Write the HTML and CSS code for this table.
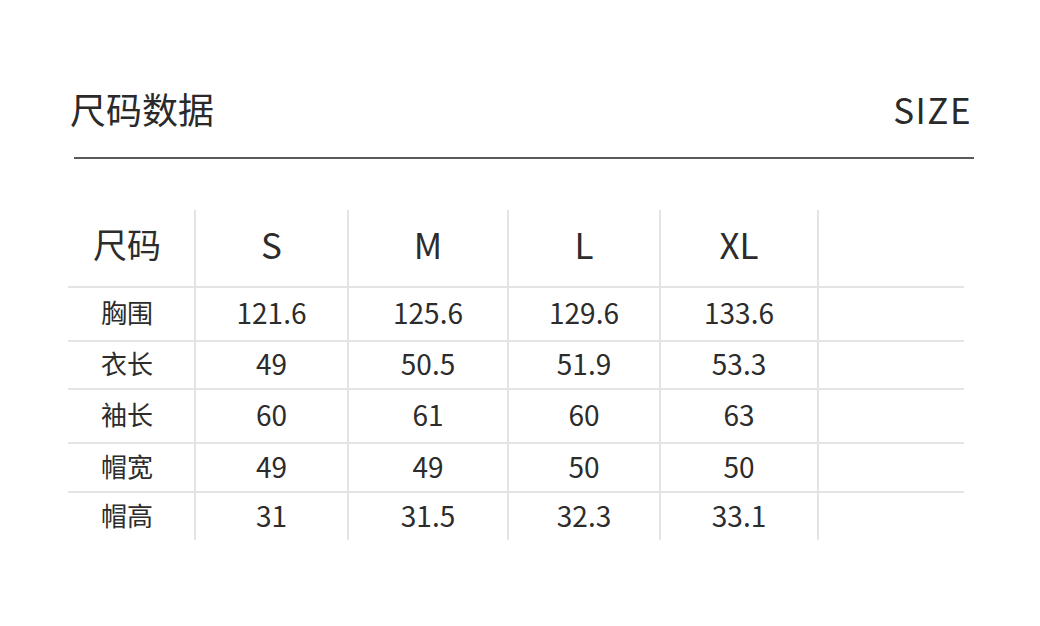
FILE: index.html
```html
<!DOCTYPE html>
<html lang="zh">
<head>
<meta charset="utf-8">
<link rel="stylesheet" href="styles.css">
</head>
<body>
<div class="page">
  <header class="head">
    <h1 class="title">尺码数据</h1>
    <span class="size">SIZE</span>
  </header>
  <div class="rule"></div>
  <table class="chart">
    <tr class="hrow">
      <td class="label big">尺码</td>
      <td>S</td><td>M</td><td>L</td><td>XL</td><td></td>
    </tr>
    <tr class="r1"><td class="label">胸围</td><td>121.6</td><td>125.6</td><td>129.6</td><td>133.6</td><td></td></tr>
    <tr class="r2"><td class="label">衣长</td><td>49</td><td>50.5</td><td>51.9</td><td>53.3</td><td></td></tr>
    <tr class="r3"><td class="label">袖长</td><td>60</td><td>61</td><td>60</td><td>63</td><td></td></tr>
    <tr class="r4"><td class="label">帽宽</td><td>49</td><td>49</td><td>50</td><td>50</td><td></td></tr>
    <tr class="r5"><td class="label">帽高</td><td>31</td><td>31.5</td><td>32.3</td><td>33.1</td><td></td></tr>
  </table>
</div>
</body>
</html>
```

FILE: styles.css
```css
html, body {
  margin: 0;
  padding: 0;
  background: #ffffff;
}
body {
  font-family: "Noto Sans CJK SC", "Noto Sans", sans-serif;
  color: #2e2e2e;
  width: 1040px;
  height: 626px;
  overflow: hidden;
}
.page {
  padding-top: 88px;
}
.head {
  display: flex;
  justify-content: space-between;
  align-items: center;
  margin-left: 70px;
  width: 902px;
  height: 40px;
}
.title {
  margin: 0;
  font-size: 36px;
  font-weight: 400;
  line-height: 40px;
  color: #2a2a2a;
}
.size {
  font-size: 35px;
  line-height: 40px;
  letter-spacing: 1.5px;
  color: #2a2a2a;
  position: relative;
  top: 1px;
}
.rule {
  margin: 29px 0 0 74px;
  width: 900px;
  height: 2px;
  background: #5a5a5a;
}
.chart {
  margin: 51px 0 0 68px;
  border-collapse: collapse;
  table-layout: fixed;
}
.chart td {
  padding: 0 0 4px 0;
  text-align: center;
  font-size: 28px;
  line-height: 1;
  color: #2c2c2c;
  border-left: 2px solid #e4e4e4;
  border-top: 2px solid #e4e4e4;
}
.chart td:first-child {
  border-left: none;
  padding-right: 8px;
}
.chart tr.hrow td {
  border-top: none;
  height: 67px;
  padding-bottom: 9px;
  font-size: 35px;
}
.chart td:nth-child(1) { width: 118px; }
.chart td:nth-child(2) { width: 151px; }
.chart td:nth-child(3) { width: 158px; }
.chart td:nth-child(4) { width: 150px; }
.chart td:nth-child(5) { width: 156px; }
.chart td:nth-child(6) { width: 145px; }
.chart td.label {
  font-size: 26px;
}
.chart tr.hrow td.label.big {
  font-size: 34px;
}
.r1 td { height: 48px; }
.r2 td { height: 42px; }
.r3 td { height: 48px; }
.r4 td { height: 43px; }
.r5 td { height: 43px; }
```
